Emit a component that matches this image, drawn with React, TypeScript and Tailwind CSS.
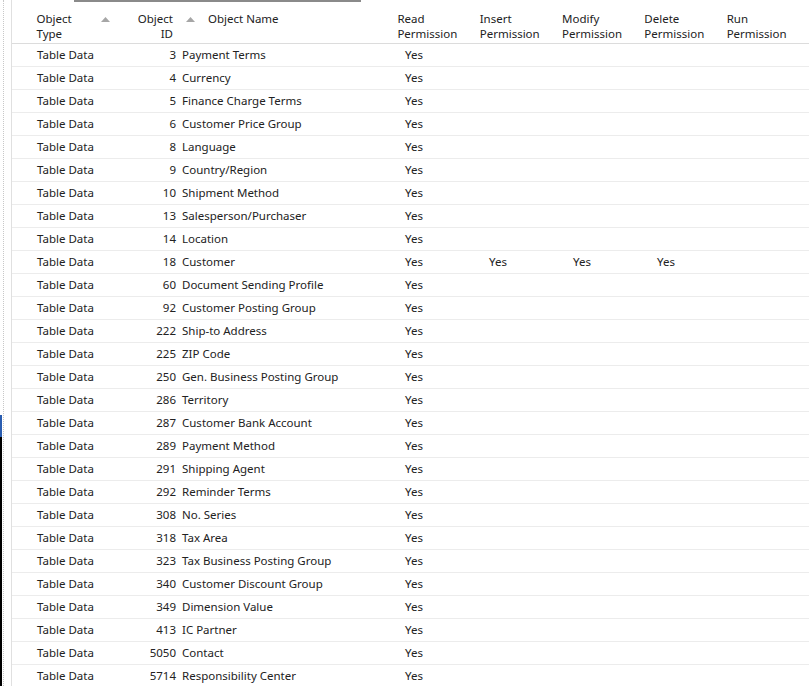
const rows: [number, string, boolean?][] = [
  [3, 'Payment Terms'],
  [4, 'Currency'],
  [5, 'Finance Charge Terms'],
  [6, 'Customer Price Group'],
  [8, 'Language'],
  [9, 'Country/Region'],
  [10, 'Shipment Method'],
  [13, 'Salesperson/Purchaser'],
  [14, 'Location'],
  [18, 'Customer', true],
  [60, 'Document Sending Profile'],
  [92, 'Customer Posting Group'],
  [222, 'Ship-to Address'],
  [225, 'ZIP Code'],
  [250, 'Gen. Business Posting Group'],
  [286, 'Territory'],
  [287, 'Customer Bank Account'],
  [289, 'Payment Method'],
  [291, 'Shipping Agent'],
  [292, 'Reminder Terms'],
  [308, 'No. Series'],
  [318, 'Tax Area'],
  [323, 'Tax Business Posting Group'],
  [340, 'Customer Discount Group'],
  [349, 'Dimension Value'],
  [413, 'IC Partner'],
  [5050, 'Contact'],
  [5714, 'Responsibility Center'],
];

const Arrow = () => (
  <svg width="9" height="5" viewBox="0 0 9 5" className="mt-[6px]">
    <path d="M0 5 L4.5 0 L9 5 Z" fill="#a6a6a6" />
  </svg>
);

export default function App() {
  return (
    <div
      className="relative w-[809px] h-[686px] overflow-hidden bg-white text-[11.5px] text-[#222]"
      style={{ fontFamily: '"Noto Sans", "Open Sans", sans-serif' }}
    >
      <div className="absolute left-[74px] top-0 w-[287px] h-[2px] bg-[#8a8a8a]" />
      <div className="absolute left-[3px] top-0 h-full border-l border-dotted border-[#c8c8c8]" />
      <div className="absolute left-0 top-[415px] w-[2px] h-[22px] bg-[#2a5db0]" />
      <div className="absolute left-0 top-[437px] w-[2px] h-[249px] bg-black" />
      <div className="ml-[11px] pt-[8px] border-l border-[#e0e0e0] h-full">
        <div className="flex h-[36px] pt-[3px] border-b border-[#dcdcdc] leading-[15px]">
          <div className="w-[25px]" />
          <div className="w-[88px] flex justify-between pr-[13px]">
            <span>Object<br />Type</span>
            <Arrow />
          </div>
          <div className="w-[51px] text-right">Object<br />ID</div>
          <div className="w-[229px] flex">
            <div className="ml-[13px]"><Arrow /></div>
            <span className="ml-[13px]">Object Name</span>
          </div>
          {['Read', 'Insert', 'Modify', 'Delete', 'Run'].map((p) => (
            <div key={p} className="w-[84px]">{p}<br />Permission</div>
          ))}
        </div>
        {rows.map(([id, name, full]) => (
          <div key={id} className="flex h-[23px] items-center border-b border-[#ececec]">
            <div className="w-[25px]" />
            <div className="w-[88px]">Table Data</div>
            <div className="w-[51px] text-right">{id}</div>
            <div className="w-[229px] pl-[6px]">{name}</div>
            <div className="w-[84px]">Yes</div>
            <div className="w-[84px]">{full ? 'Yes' : ''}</div>
            <div className="w-[84px]">{full ? 'Yes' : ''}</div>
            <div className="w-[84px]">{full ? 'Yes' : ''}</div>
          </div>
        ))}
      </div>
    </div>
  );
}
